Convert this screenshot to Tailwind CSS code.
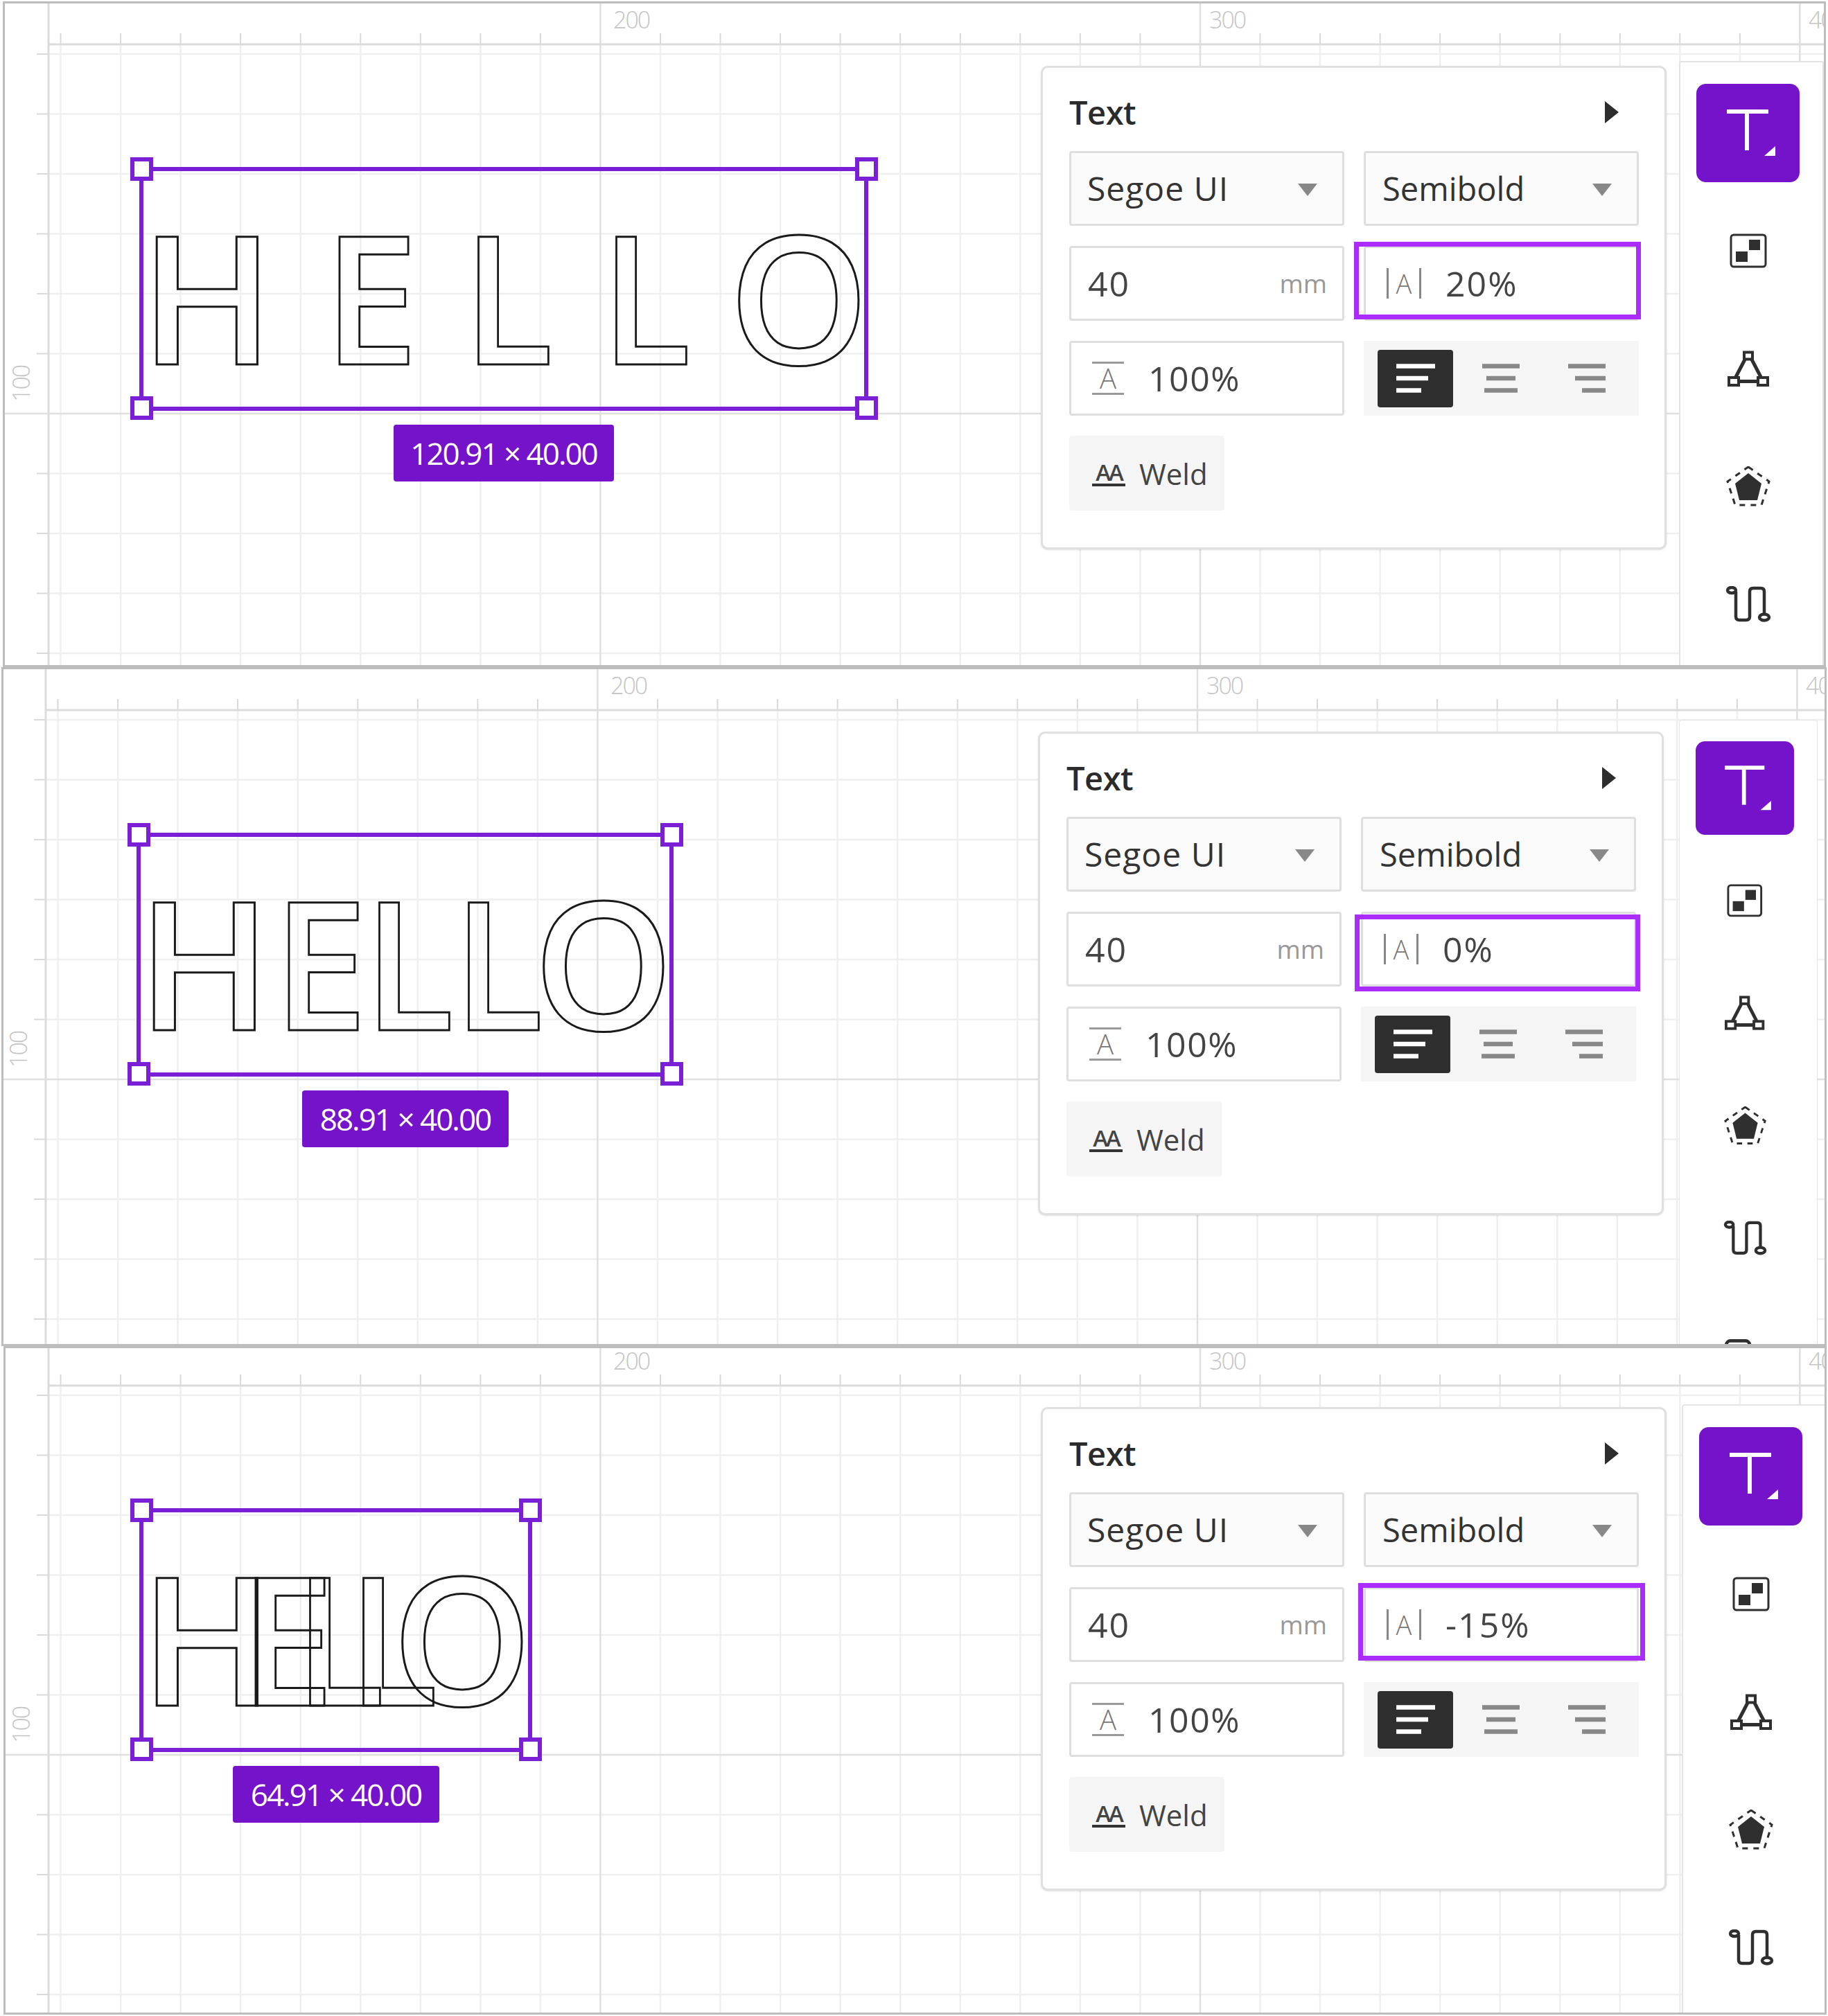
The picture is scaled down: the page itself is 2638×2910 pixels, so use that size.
<!DOCTYPE html>
<html lang="en">
<head>
<meta charset="UTF-8" />
<title>Text spacing</title>
<script src="https://cdn.jsdelivr.net/npm/@tailwindcss/browser@4"></script>
</head>
<body class="bg-white font-['Open_Sans',sans-serif] text-[#333]">
<main id="app" class="flex flex-col w-[2638px] h-[2910px] pt-[2px]"></main>
<script>
// page-space measurements for the three captures
const panels = [
  { cls: 'ml-[4px] w-[2631px] h-[961px]', x: -7, y: -5, spacing: 69.5, w: 1046, sizeX: 568, sizeW: 318, size: '120.91 × 40.00', value: '20%', hl: [1954, 349, 414, 112], toolLeft: 2423, toolTop: 88, zoom: 1, textX: 1502 },
  { cls: 'ml-[2px] w-[2634px] h-[980px]', x: -9, y: -5, spacing: 0, w: 769, sizeX: 440, sizeW: 298, size: '88.91 × 40.00', value: '0%', hl: [1959, 359, 412, 111], toolLeft: 2427, toolTop: 78, zoom: 0.955, textX: 1502 },
  { cls: 'ml-[5px] w-[2631px] h-[965px]', x: -8, y: -10, spacing: -52, w: 561, sizeX: 336, sizeW: 298, size: '64.91 × 40.00', value: '-15%', hl: [1960, 349, 414, 112], toolLeft: 2427, toolTop: 91, zoom: 1, textX: 1502 },
];

function gridLines() {
  let minor = '', major = '', ticks = '';
  for (let i = 0; i < 31; i++) {
    const x = +(87.5 + 86.55 * i).toFixed(1);
    if (i % 10 == 9) major += `M${x} 0V1000`;
    else { minor += `M${x} 64V1000`; ticks += `M${x} 48V64`; }
  }
  for (let j = 0; j < 11; j++) {
    const y = +(78 + 86.5 * j).toFixed(1);
    if (j == 6) major += `M0 ${y}H2640`;
    else { minor += `M70 ${y}H2640`; ticks += `M53 ${y}H70`; }
  }
  return `<svg class="absolute left-0 top-0" width="2640" height="1000" fill="none">
    <path d="${minor}" stroke="#efefef" stroke-width="2.5"/>
    <path d="${ticks}" stroke="#d9d9d9" stroke-width="2"/>
    <path d="M70 0V1000M70 64H2640" stroke="#dcdcdc" stroke-width="3"/>
    <path d="${major}" stroke="#dfdfdf" stroke-width="2.5"/>
  </svg>`;
}

const handle = 'absolute w-[33px] h-[34px] bg-white border-[6px] border-[#7a1fd6]';

// Open Sans sets E and L wider than the reference font: trim each gap and narrow those letters
function hello(spacing) {
  const trim = [2, -13, -11, -25, 0];
  const narrow = [1, 0.95, 0.93, 0.93, 1];
  return [...'HELLO'].map((c, i) => `<span class="inline-block origin-left" style="letter-spacing:${spacing + trim[i]}px;transform:scaleX(${narrow[i]})">${c}</span>`).join('');
}

function selection(p) {
  return `
  <div class="absolute top-[241px] h-[352px] border-[6px] border-[#7a1fd6]" style="left:201px;width:${p.w + 6}px"></div>
  <div class="${handle} left-[188px] top-[227px]"></div>
  <div class="${handle} top-[227px]" style="left:${188 + p.w}px"></div>
  <div class="${handle} left-[188px] top-[572px]"></div>
  <div class="${handle} top-[572px]" style="left:${188 + p.w}px"></div>
  <div class="absolute top-[297px] left-[202px] text-[258px] leading-none font-semibold whitespace-nowrap text-transparent [-webkit-text-stroke:3px_#1a1a1a]">${hello(p.spacing)}</div>
  <div class="absolute top-[613px] h-[82px] flex items-center justify-center rounded-[4px] bg-[#7413c9] text-white text-[44px] tracking-[-2px] whitespace-nowrap" style="left:${p.sizeX}px;width:${p.sizeW}px">${p.size}</div>`;
}

const field = 'flex items-center h-[108px] rounded-[4px] border-[3px] border-[#dedede]';
const caret = `<svg class="ml-auto mt-[3px]" width="28" height="18" viewBox="0 0 28 18"><path d="M0 0H28L14 18Z" fill="#888"/></svg>`;

function textPanel(p) {
  return `
  <section class="absolute top-[95px] w-[903px] h-[698px] bg-white rounded-[10px] border-[3px] border-[#e0e0e0] shadow-sm pl-[38px] pr-[37px]" style="left:${p.textX}px">
    <div class="flex items-center justify-between h-[120px] pt-[8px]">
      <h2 class="text-[47px] font-semibold tracking-[-0.5px] text-[#2b2b2b]">Text</h2>
      <svg class="mr-[29px]" width="20" height="32" viewBox="0 0 20 32"><path d="M0 0L20 16L0 32Z" fill="#2d2d2d"/></svg>
    </div>
    <div class="grid grid-cols-2 gap-x-[28px] gap-y-[29px]">
      <div class="${field} bg-[#fafafa] pl-[23px] pr-[36px] text-[48px] tracking-[1px]">Segoe UI${caret}</div>
      <div class="${field} bg-[#fafafa] pl-[24px] pr-[36px] text-[47px]">Semibold${caret}</div>
      <div class="${field} pl-[24px] pr-[22px] text-[50px] tracking-[2px] text-[#444]">40<span class="ml-auto text-[37px] tracking-normal text-[#999]">mm</span></div>
      <div class="${field} pl-[30px] text-[50px] tracking-[2px] text-[#444]">
        <span class="flex items-center justify-center w-[50px] h-[44px] border-x-[3px] border-[#888] text-[38px] tracking-normal font-light text-[#777]">A</span>
        <span class="ml-[35px]">${p.value}</span>
      </div>
      <div class="${field} pl-[30px] text-[50px] tracking-[1.5px] text-[#444]">
        <span class="flex items-center justify-center w-[46px] h-[48px] border-y-[3px] border-[#999] text-[40px] tracking-normal font-light text-[#777]">A</span>
        <span class="ml-[35px]">100%</span>
      </div>
      <div class="grid grid-cols-3 items-center justify-items-center h-[108px] px-[13px] bg-[#f5f5f5]">
        <span class="flex items-center justify-center w-[109px] h-[83px] rounded-[4px] bg-[#2f2f2f]">
          <svg width="56" height="42" viewBox="0 0 56 42" fill="none" stroke="#fff" stroke-width="6.5"><path d="M0 3.5H56M0 21H46M0 38.500H36"/></svg>
        </span>
        <svg width="54" height="42" viewBox="0 0 54 42" fill="none" stroke="#888" stroke-width="6.5"><path d="M0 3.5H54M6 21H48M3 38.500H51"/></svg>
        <svg width="54" height="42" viewBox="0 0 54 42" fill="none" stroke="#888" stroke-width="6.500"><path d="M0 3.5H54M10 21H54M20 38.500H54"/></svg>
      </div>
    </div>
    <div class="flex items-center gap-[20px] w-[224px] h-[108px] mt-[29px] pl-[33px] rounded-[4px] bg-[#f5f5f5] text-[42px] text-[#444]">
      <span class="flex items-end justify-center w-[48px] h-[38px] border-b-[4px] border-[#333] text-[33px] leading-[32px] tracking-[-3px] font-semibold">AA</span>
      <span>Weld</span>
    </div>
  </section>`;
}

function toolbar(p) {
  return `
  <nav class="absolute w-[209px] h-[1200px] bg-white rounded-t-[4px] border-[2px] border-[#e4e4e4] pt-[17px] pr-[10px] flex flex-col items-center" style="left:${p.toolLeft / p.zoom}px;top:${p.toolTop / p.zoom}px;zoom:${p.zoom}">
    <div class="flex items-center justify-center h-[170px] shrink-0 w-full">
      <span class="relative flex items-center justify-center w-[149px] h-[142px] rounded-[14px] bg-[#7413c9]">
        <svg width="149" height="142" viewBox="0 0 149 142" fill="none"><path d="M44 40H104" stroke="#fff" stroke-width="6"/><path d="M73 40V96" stroke="#fff" stroke-width="6"/><path d="M98 104L114 90V104Z" fill="#fff"/></svg>
      </span>
    </div>
    <div class="flex items-center justify-center h-[170px] shrink-0">
      <svg width="54" height="50" viewBox="0 0 54 50" fill="#2f2f2f"><rect x="2" y="2" width="50" height="46" rx="4" fill="none" stroke="#2f2f2f" stroke-width="3"/><rect x="28" y="9" width="16" height="15"/><rect x="9" y="26" width="17" height="15"/></svg>
    </div>
    <div class="flex items-center justify-center h-[170px] shrink-0">
      <svg width="60" height="52" viewBox="0 0 60 52" fill="none" stroke="#2f2f2f" stroke-width="5"><path d="M25 13L12 38M35 13L48 38M16 44.500H44"/><rect x="24" y="2.500" width="12" height="10" stroke-width="4"/><rect x="2" y="39" width="14" height="11" stroke-width="4"/><rect x="44" y="39" width="14" height="11" stroke-width="4"/></svg>
    </div>
    <div class="flex items-center justify-center h-[170px] shrink-0">
      <svg width="66" height="58" viewBox="0 0 66 58" fill="none"><path d="M33 10L52 25L46 49H20L14 25Z" fill="#2f2f2f"/><path d="M33 1L63 22L52 56H14L3 22Z" stroke="#2f2f2f" stroke-width="3" stroke-dasharray="8 8"/></svg>
    </div>
    <div class="flex items-center justify-center h-[170px] shrink-0">
      <svg width="66" height="52" viewBox="0 0 66 52" fill="none" stroke="#2f2f2f" stroke-width="4.500" stroke-linejoin="round"><ellipse cx="9" cy="6" rx="6" ry="4"/><path d="M15 8V44Q15 49 20 49H30Q35 49 35 44V8Q35 3 40 3H51Q56 3 56 8V40"/><ellipse cx="56" cy="45" rx="7" ry="4.500"/></svg>
    </div>
    <div class="flex items-center justify-center h-[170px] shrink-0 -ml-[20px] pt-[16px]">
      <svg width="40" height="50" viewBox="0 0 40 50" fill="none" stroke="#2f2f2f" stroke-width="5"><rect x="2.500" y="2.500" width="35" height="45" rx="6"/></svg>
    </div>
  </nav>`;
}

function panel(p) {
  return `
  <section class="relative shrink-0 overflow-hidden bg-white border-[3px] border-[#bdbdbd] ${p.cls}">
    <div class="absolute w-[2650px] h-[1000px]" style="left:${p.x}px;top:${p.y}px">
      ${gridLines()}
      <div class="absolute left-[885px] top-[11px] text-[34px] leading-none font-light tracking-[-2px] text-[#c4c4c4]">200</div>
      <div class="absolute left-[1745px] top-[11px] text-[34px] leading-none font-light tracking-[-2px] text-[#c4c4c4]">300</div>
      <div class="absolute left-[2610px] top-[11px] text-[34px] leading-none font-light tracking-[-2px] text-[#c4c4c4]">400</div>
      <div class="absolute left-[0px] top-[535px] w-[50px] h-[40px] -rotate-90 text-center text-[34px] font-light tracking-[-2px] text-[#c4c4c4]">100</div>
      ${selection(p)}
      ${textPanel(p)}
      <div class="absolute border-[7px] border-[#aa2cff]" style="left:${p.hl[0]}px;top:${p.hl[1]}px;width:${p.hl[2]}px;height:${p.hl[3]}px"></div>
      ${toolbar(p)}
    </div>
  </section>`;
}

document.getElementById('app').innerHTML = panels.map(panel).join('');
</script>
</body>
</html>
